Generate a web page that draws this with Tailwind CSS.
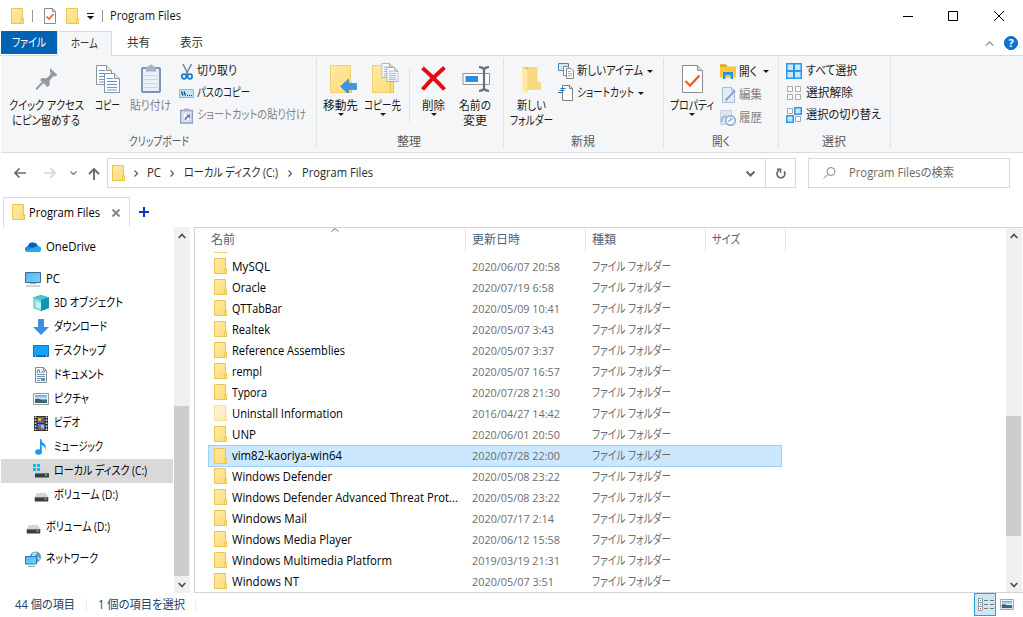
<!DOCTYPE html>
<html lang="ja">
<head>
<meta charset="utf-8">
<title>Program Files</title>
<script src="https://cdn.jsdelivr.net/npm/@tailwindcss/browser@4"></script>
</head>
<body class="bg-white">
<svg class="absolute w-0 h-0">
  <defs>
    <linearGradient id="gf" x1="0" y1="0" x2="1" y2="1"><stop offset="0" stop-color="#ffeaa5"/><stop offset="1" stop-color="#fddc77"/></linearGradient>
    <linearGradient id="gb" x1="0" y1="0" x2="1" y2="1"><stop offset="0" stop-color="#4fb8f5"/><stop offset="1" stop-color="#7cd0ff"/></linearGradient>
    <linearGradient id="gn" x1="0" y1="0" x2="0" y2="1"><stop offset="0" stop-color="#5aa0e6"/><stop offset=".5" stop-color="#dcefff"/><stop offset=".6" stop-color="#4a7f86"/><stop offset="1" stop-color="#2b5a7a"/></linearGradient>
  </defs>
  <symbol id="folder" viewBox="0 0 13 16"><path d="M.5.5h11v10h1v5H.5z" fill="url(#gf)" stroke="#eac54f"/><path d="M10.500 15.500v-4.500h2v4.500z" fill="#ffe798" stroke="#e8c04a" stroke-width=".8"/></symbol>
  <symbol id="bigfolder" viewBox="0 0 26 28"><path d="M.5.5h20v17h1v10H.5z" fill="url(#gf)" stroke="#f0cf6c"/><path d="M18.500 27.500V18q0-1 1.500-1t1.500 1v9q0 .5-.5.5z" fill="#fde08a" stroke="#eac04f"/></symbol>
  <symbol id="doc" viewBox="0 0 16 20"><path d="M.5.5h10l5 5v14H.5z" fill="#fff" stroke="#8d9299"/><path d="M10.500.5v5h5" fill="#e8e8e8" stroke="#8d9299"/><path d="M3 5.500h6M3 8.500h10M3 11.500h10M3 14.500h10M3 17h10" stroke="#5c9ce6"/></symbol>
  <symbol id="down" viewBox="0 0 6 3"><path d="M0 0h6L3 3z" fill="#1b1b1b"/></symbol>
  <symbol id="chev" viewBox="0 0 4 7"><path d="M.5.5l3 3-3 3" fill="none" stroke="#5f5f5f" stroke-width="1.300"/></symbol>
  <symbol id="drive" viewBox="0 0 14 9"><path d="M2.500 0h9L14 4H0z" fill="#d4d4d4"/><path d="M0 4h14v4.500H0z" fill="#3a3d40"/><path d="M0 4h14v1H0z" fill="#777"/><rect x="10" y="5.500" width="2" height="1.500" fill="#3fe05a"/></symbol>
  <symbol id="photo" viewBox="0 0 16 12" preserveAspectRatio="none"><path d="M.5.5h15v11H.5z" fill="#fff" stroke="#989898"/><rect x="2" y="2" width="12" height="8" fill="url(#gn)"/><path d="M2 6q4-1 6 1t6 .5V8H2z" fill="#355f52"/></symbol>
</svg>

<div id="app" class="w-[1023px] h-[617px] flex flex-col overflow-hidden bg-white text-[12px] leading-[16px] text-[#1a1a1a] whitespace-nowrap cursor-default [font-family:'Open_Sans','Noto_Sans_CJK_JP',sans-serif] [font-feature-settings:'palt']">

  <!-- Title bar -->
  <header class="h-[31px] flex items-center justify-between shrink-0">
    <div class="flex items-center pl-[11px]">
      <svg class="w-[13px] h-[16px]"><use href="#folder"/></svg>
      <i class="w-px h-[12px] bg-[#9a9a9a] ml-2 mr-[11px]"></i>
      <svg class="w-[12px] h-[16px]" viewBox="0 0 12 16"><path d="M.5.5h8l3 3v12H.5z" fill="#fff" stroke="#8b8b8b"/><path d="M8.500.5v3h3" fill="#ddd" stroke="#8b8b8b"/><path d="M2.500 8.500l2.500 2.500 4.500-5" fill="none" stroke="#f2622a" stroke-width="1.700"/></svg>
      <svg class="w-[13px] h-[16px] ml-[10px]"><use href="#folder"/></svg>
      <svg class="w-[7px] h-[7px] ml-2 mt-px" viewBox="0 0 7 7"><path d="M0 .5h7" stroke="#111"/><path d="M0 3h7L3.500 6.500z" fill="#111"/></svg>
      <i class="w-px h-[12px] bg-[#9a9a9a] ml-2 mr-[7px]"></i>
      <span data-w="71" class="text-[#111]">Program Files</span>
    </div>
    <div class="flex items-center pr-[19px] text-black">
      <svg class="w-[10px] h-[10px]" viewBox="0 0 10 10"><path d="M0 5.500h10" stroke="currentColor"/></svg>
      <svg class="w-[10px] h-[10px] ml-[35px]" viewBox="0 0 10 10"><path d="M.5.5h9v9h-9z" fill="none" stroke="currentColor"/></svg>
      <svg class="w-[10px] h-[10px] ml-[36px]" viewBox="0 0 10 10"><path d="M0 0l10 10M10 0L0 10" stroke="currentColor"/></svg>
    </div>
  </header>

  <!-- Ribbon tabs -->
  <nav class="h-[25px] flex items-start shrink-0 pl-px border-b border-[#dadbdc] text-[#333]">
    <div class="w-[56px] h-[23px] bg-[#0063b1] text-white flex items-center justify-center"><span data-w="34">ファイル</span></div>
    <div class="w-[55px] h-[25px] bg-[#f5f6f7] border border-b-0 border-[#dadbdc] flex items-center justify-center pb-px"><span data-w="27">ホーム</span></div>
    <div class="w-[54px] h-[24px] flex items-center justify-center"><span data-w="23">共有</span></div>
    <div class="w-[52px] h-[24px] flex items-center justify-center"><span data-w="23">表示</span></div>
    <div class="flex items-center ml-auto h-[24px] pr-[5px]">
      <svg class="w-[9px] h-[5px] mr-[10px]" viewBox="0 0 9 5"><path d="M.7 4.500l3.800-3.500 3.800 3.500" fill="none" stroke="#9a9a9a" stroke-width="1.400"/></svg>
      <div class="size-[14px] rounded-full bg-[#0a74d6] border border-[#0560b8] text-white font-bold text-[11px] leading-[12px] text-center">?</div>
    </div>
  </nav>

  <!-- Ribbon -->
  <section class="h-[97px] flex shrink-0 ml-px bg-[#f5f6f7] border-b border-[#dadbdc]">
    <!-- clipboard -->
    <div class="w-[316px] flex flex-col relative">
      <div class="flex h-[78px]">
        <div class="w-[91px] flex flex-col items-center pt-[12px]">
          <svg class="w-[22px] h-[22px] mb-[8px]" viewBox="0 0 22 22"><path d="M14 0l7.500 7-2.500 1.500-1.500-.3-4 4.300.3 4.500-2.300 2L4 12l2-2 4.800.3 4-4.300-.8-2z" fill="#929ba3"/><path d="M7.500 13.500L0 21.500" stroke="#929ba3" stroke-width="2"/></svg>
          <span data-w="75" class="leading-[15px]">クイック アクセス</span><span data-w="68" class="leading-[15px]">にピン留めする</span>
        </div>
        <div class="w-[31px] flex flex-col items-center pt-[9px]">
          <svg class="w-[24px] h-[28px] mb-[5px]" viewBox="0 0 24 28"><use href="#doc" width="16" height="20"/><use href="#doc" x="8" y="8" width="16" height="20"/></svg>
          <span data-w="25" class="leading-[15px]">コピー</span>
        </div>
        <div class="w-[56px] flex flex-col items-center pt-[8px] text-[#838383]">
          <svg class="w-[20px] h-[29px] mb-[5px]" viewBox="0 0 20 29"><rect x="1" y="4" width="18" height="24" rx="1" fill="#e9f0fa" stroke="#7f93bd" stroke-width="2"/><path d="M5 2.500h3q0-2 2-2t2 2h3v5H5z" fill="#a9b2c2"/><path d="M3 11.500h14M3 15.500h14M3 19.500h14M3 23.500h14" stroke="#c5d6f0"/></svg>
          <span data-w="41" class="leading-[15px]">貼り付け</span>
        </div>
        <div class="flex flex-col pt-[4px]">
          <div class="h-[22px] flex items-center"><svg class="w-[16px] h-[16px] mr-[2px] mt-px" viewBox="0 0 16 16"><path d="M4 0l5 10.500M12.500 0L7 10.500" stroke="#76828e" stroke-width="1.500"/><circle cx="5" cy="12.500" r="2.300" fill="none" stroke="#1979ca" stroke-width="1.700"/><circle cx="10.800" cy="12.500" r="2.300" fill="none" stroke="#1979ca" stroke-width="1.700"/></svg><span data-w="40">切り取り</span></div>
          <div class="h-[22px] flex items-center"><svg class="w-[15px] h-[9px] mr-[3px]" viewBox="0 0 15 9"><path d="M.5.5h14v8H.5z" fill="#bfe3fa" stroke="#8db9d8"/><path d="M2.500 2.500L4 6.500M5 2.500l1.500 4" stroke="#173a57" stroke-width="1.200"/><path d="M8 6.500h1M10 6.500h1M12 6.500h1" stroke="#173a57"/></svg><span data-w="53">パスのコピー</span></div>
          <div class="h-[22px] flex items-center text-[#838383]"><svg class="w-[13px] h-[16px] ml-px mr-[4px] mt-px" viewBox="0 0 13 16"><path d="M.7 2.500h11.600v12.500H.7z" fill="#e9eff8" stroke="#8d9fc2" stroke-width="1.400"/><path d="M4 .5h5v3H4z" fill="#a9b2c2"/><path d="M3 5h7v8H3z" fill="#fff" stroke="#a9badb" stroke-width=".7"/><path d="M4.500 12q0-3.500 3-4L6 6.500h4v4L8.800 9.300Q6.500 10 6 12z" fill="#637fae"/></svg><span data-w="109">ショートカットの貼り付け</span></div>
        </div>
      </div>
      <div class="flex justify-center text-[#5a5a5a]"><span data-w="60">クリップボード</span></div>
      <i class="absolute right-0 top-[2px] w-px h-[90px] bg-[#e2e3e4]"></i>
    </div>
    <!-- organize -->
    <div class="w-[187px] flex flex-col relative">
      <div class="flex h-[78px]">
        <div class="w-[46px] ml-px flex flex-col items-center pt-[9px]">
          <svg class="w-[27px] h-[28px] mb-[5px] ml-[5px]" viewBox="0 0 27 28"><use href="#bigfolder" width="26" height="28"/><path d="M10.500 21.500l8-7.500v4.500h8v6h-8V29z" fill="#3b97e3" stroke="#2c7fc8" stroke-width=".6"/></svg>
          <span data-w="35" class="leading-[15px]">移動先</span><svg class="w-[6px] h-[3px]"><use href="#down"/></svg>
        </div>
        <div class="w-[40px] -ml-px flex flex-col items-center pt-[7px]">
          <svg class="w-[27px] h-[30px] mb-[5px] ml-[4px]" viewBox="0 0 27 30"><use href="#bigfolder" y="2" width="26" height="28"/><use href="#doc" x="9.500" y="0" width="12" height="15"/><use href="#doc" x="14.500" y="4" width="12" height="15"/></svg>
          <span data-w="37" class="leading-[15px]">コピー先</span><svg class="w-[6px] h-[3px]"><use href="#down"/></svg>
        </div>
        <i class="w-px h-[55px] mt-[11px] ml-[6px] bg-[#e2e3e4]"></i>
        <div class="w-[47px] flex flex-col items-center pt-[10px]">
          <svg class="w-[25px] h-[25px] mb-[7px]" viewBox="0 0 25 25"><path d="M1.500 2Q12 11 23.500 23.500M23.500 1.500Q11 12 1.500 23.500" fill="none" stroke="#e60b12" stroke-width="4"/></svg>
          <span data-w="23" class="leading-[15px]">削除</span><svg class="w-[6px] h-[3px]"><use href="#down"/></svg>
        </div>
        <div class="w-[37px] flex flex-col items-center pt-[10px]">
          <svg class="w-[29px] h-[26px] mb-[6px] ml-[2px]" viewBox="0 0 29 26"><path d="M1 7.500h26.500v11H1z" fill="#fff" stroke="#8f969c"/><path d="M3.500 10H16v6H3.500z" fill="#2b8de0"/><path d="M17 1.200q4 0 5 2.300 1-2.300 5-2.300M22 3v20M17 24.800q4 0 5-2.300 1 2.300 5 2.300" fill="none" stroke="#6a7278" stroke-width="2.200"/></svg>
          <span data-w="32" class="leading-[15px]">名前の</span><span data-w="24" class="leading-[15px]">変更</span>
        </div>
      </div>
      <div class="flex justify-center text-[#5a5a5a] pr-[2px]"><span data-w="24">整理</span></div>
      <i class="absolute right-0 top-[2px] w-px h-[90px] bg-[#e2e3e4]"></i>
    </div>
    <!-- new -->
    <div class="w-[160px] flex flex-col relative">
      <div class="flex h-[78px]">
        <div class="w-[54px] flex flex-col items-center pt-[10px]">
          <svg class="w-[19px] h-[28px] mb-[4px]" viewBox="0 0 19 28"><path d="M0 1h15v14l3.500 2v7H4z" fill="#f3c85c"/><path d="M6 1h9.500v14l3.500 2v7H6z" fill="#f9d97f"/><path d="M0 1l5.500 3v24L0 24z" fill="#ffe9a8"/></svg>
          <span data-w="29" class="leading-[15px]">新しい</span><span data-w="43" class="leading-[15px]">フォルダー</span>
        </div>
        <div class="flex flex-col pt-[4px]">
          <div class="h-[22px] flex items-center"><svg class="w-[16px] h-[16px] mr-[3px]" viewBox="0 0 16 16"><path d="M.5.5h10v7H.5z" fill="#cfe8f5" stroke="#4d88a8"/><path d="M5.500 3.500h5v9h-5z" fill="#fff" stroke="#888"/><path d="M8.500 5.500h4.500l2.500 2.500v7.500h-7z" fill="#fff" stroke="#888"/><path d="M10 8.500h3M10 10.500h4M10 12.500h4" stroke="#c98a8a" stroke-width=".8"/></svg><span data-w="66">新しいアイテム</span><svg class="w-[6px] h-[3px] ml-[4px]"><use href="#down"/></svg></div>
          <div class="h-[22px] flex items-center"><svg class="w-[16px] h-[16px] mr-[3px]" viewBox="0 0 16 16"><path d="M4.500.5h7l3 3v12h-10z" fill="#fff" stroke="#808080"/><path d="M11.500.5v3h3" fill="none" stroke="#808080"/><path d="M2.500 3.500h5M1.500 5.500h5M0 7.500h5" stroke="#2670ac" stroke-width="1.200"/></svg><span data-w="57">ショートカット</span><svg class="w-[6px] h-[3px] ml-[4px]"><use href="#down"/></svg></div>
        </div>
      </div>
      <div class="flex justify-center text-[#5a5a5a] pr-[2px]"><span data-w="24">新規</span></div>
      <i class="absolute right-0 top-[2px] w-px h-[90px] bg-[#e2e3e4]"></i>
    </div>
    <!-- open -->
    <div class="w-[115px] flex flex-col relative">
      <div class="flex h-[78px]">
        <div class="w-[56px] flex flex-col items-center pt-[9px]">
          <svg class="w-[21px] h-[28px] mb-[5px]" viewBox="0 0 21 28"><path d="M.5.5h15l5 5v22H.5z" fill="#fff" stroke="#8b8b8b"/><path d="M15.500.5v5h5" fill="#ddd" stroke="#8b8b8b"/><path d="M3.500 16l4.500 4.500 9.500-10" fill="none" stroke="#f2621e" stroke-width="2.400"/></svg>
          <span data-w="44" class="leading-[15px]">プロパティ</span><svg class="w-[6px] h-[3px]"><use href="#down"/></svg>
        </div>
        <div class="flex flex-col pt-[4px]">
          <div class="h-[23px] flex items-center"><svg class="w-[16px] h-[15px] mr-[3px]" viewBox="0 0 16 15"><path d="M0 .5h6l1.500 2H16v11H0z" fill="#f8c93f"/><path d="M0 .5h6l1.500 2H0z" fill="#dd9a18"/><path d="M3 15V8h10v7h-2.500v-4h-5v4z" fill="#2f8fe0"/></svg><span data-w="18">開く</span><svg class="w-[6px] h-[3px] ml-[6px]"><use href="#down"/></svg></div>
          <div class="h-[23px] flex items-center text-[#838383]"><svg class="w-[14px] h-[16px] ml-[2px] mr-[3px]" viewBox="0 0 14 16"><path d="M.5.5h9l3 3v12H.5z" fill="#e3ebf6" stroke="#a9badb"/><path d="M9.500.5v3h3" fill="none" stroke="#a9badb"/><path d="M3.500 13.500l9.500-10" stroke="#8ba3cb" stroke-width="2"/></svg><span data-w="23">編集</span></div>
          <div class="h-[23px] flex items-center text-[#838383]"><svg class="w-[16px] h-[16px] mr-[3px]" viewBox="0 0 16 16"><path d="M.5.5h11v14H.5z" fill="#dde6f3" stroke="#c3d0e6"/><path d="M2 12q-1-5 4-6" stroke="#a6b9d9" stroke-width="2" fill="none"/><circle cx="10.500" cy="10.500" r="4.800" fill="#eef3fa" stroke="#8ba3cb" stroke-width="1.400"/><path d="M10.500 7.500v3l2.500-2M8 11l2.500-.5" stroke="#8ba3cb" fill="none"/></svg><span data-w="23">履歴</span></div>
        </div>
      </div>
      <div class="flex justify-center text-[#5a5a5a] pr-[2px]"><span data-w="18">開く</span></div>
      <i class="absolute right-0 top-[2px] w-px h-[90px] bg-[#e2e3e4]"></i>
    </div>
    <!-- select -->
    <div class="w-[112px] flex flex-col relative pl-[7px]">
      <div class="flex flex-col pt-[4px] h-[78px]">
        <div class="h-[22px] flex items-center"><svg class="w-[16px] h-[16px] mr-[4px]" viewBox="0 0 16 16"><path d="M0 0h16v16H0z" fill="#3096e0"/><path d="M1.500 1.500h5.500V7H1.500zM9 1.500h5.500V7H9zM1.500 9h5.500v5.500H1.500zM9 9h5.500v5.500H9z" fill="#c3e7fd"/></svg><span data-w="51">すべて選択</span></div>
        <div class="h-[22px] flex items-center"><svg class="w-[16px] h-[16px] mr-[4px]" viewBox="0 0 16 16"><path d="M1.500 1.500h5v5h-5zM9.500 1.500h5v5h-5zM1.500 9.500h5v5h-5zM9.500 9.500h5v5h-5z" fill="#fafafa" stroke="#aaa"/></svg><span data-w="47">選択解除</span></div>
        <div class="h-[22px] flex items-center"><svg class="w-[16px] h-[16px] mr-[4px]" viewBox="0 0 16 16"><path d="M1.500 1.500h5v5h-5zM9.500 9.500h5v5h-5z" fill="#fafafa" stroke="#aaa"/><path d="M8.800.8h6.400v6.400H8.800zM.8 8.800h6.400v6.400H.8z" fill="#c3e7fd" stroke="#3096e0" stroke-width="1.500"/></svg><span data-w="75">選択の切り替え</span></div>
      </div>
      <div class="flex justify-center text-[#5a5a5a] pr-[8px]"><span data-w="24">選択</span></div>
      <i class="absolute right-0 top-[2px] w-px h-[90px] bg-[#e2e3e4]"></i>
    </div>
  </section>

  <!-- Address bar -->
  <section class="h-[44px] flex shrink-0 pt-[5px] text-[#2a2a2a]">
    <div class="w-[107px] h-[30px] flex items-center pl-[14px]">
      <svg class="w-[12px] h-[10px]" viewBox="0 0 12 10"><path d="M5.500.5L1 5l4.500 4.500M1 5h11" fill="none" stroke="#6b6b6b" stroke-width="1.700"/></svg>
      <svg class="w-[12px] h-[10px] ml-[18px]" viewBox="0 0 12 10"><path d="M6.500.5L11 5 6.500 9.500M11 5H0" fill="none" stroke="#d6d6d6" stroke-width="1.700"/></svg>
      <svg class="w-[7px] h-[4px] ml-[14px]" viewBox="0 0 7 4"><path d="M.5.5l3 3 3-3" fill="none" stroke="#888" stroke-width="1.500"/></svg>
      <svg class="w-[12px] h-[12px] ml-[11px] mt-[2px]" viewBox="0 0 12 12"><path d="M1 6l5-5 5 5M6 1v11" fill="none" stroke="#6b6b6b" stroke-width="1.900"/></svg>
    </div>
    <div class="w-[689px] h-[30px] flex items-center border border-[#d9d9d9] pl-[4px]">
      <svg class="w-[13px] h-[16px] mb-px"><use href="#folder"/></svg>
      <svg class="w-[4px] h-[7px] ml-[9px] mt-px"><use href="#chev"/></svg>
      <span data-w="14" class="ml-[9px]">PC</span>
      <svg class="w-[4px] h-[7px] ml-[9px] mt-px"><use href="#chev"/></svg>
      <span data-w="94" class="ml-[10px]">ローカル ディスク (C:)</span>
      <svg class="w-[4px] h-[7px] ml-[10px] mt-px"><use href="#chev"/></svg>
      <span data-w="71" class="ml-[10px]">Program Files</span>
      <svg class="w-[9px] h-[6px] ml-auto mr-[10px] mt-[2px]" viewBox="0 0 9 6"><path d="M.5.500l4 4 4-4" fill="none" stroke="#666" stroke-width="2"/></svg>
      <div class="w-[30px] h-full border-l border-[#d9d9d9] flex items-center justify-center"><svg class="w-[10px] h-[11px] mt-px" viewBox="0 0 10 11"><path d="M8 3.200A4 4 0 1 1 3 2.300M1 1.300h3.500v3.500" fill="none" stroke="#666" stroke-width="1.600"/></svg></div>
    </div>
    <div class="w-[202px] h-[30px] ml-[12px] flex items-center border border-[#d9d9d9] pl-[14px] text-[#686868]">
      <svg class="w-[13px] h-[12px] mr-[13px]" viewBox="0 0 13 12"><circle cx="8" cy="4.500" r="4" fill="none" stroke="#858585"/><path d="M5 7.500L.5 11.500" stroke="#858585"/></svg>
      <span data-w="105">Program Filesの検索</span>
    </div>
  </section>

  <!-- Folder tabs -->
  <section class="h-[30px] flex shrink-0 pl-[3px]">
    <div class="w-[127px] h-[30px] border border-b-0 border-[#dadada] flex items-center pl-[8px] text-black">
      <svg class="w-[13px] h-[16px] mb-[2px]"><use href="#folder"/></svg>
      <span data-w="71" class="ml-[4px]">Program Files</span>
      <svg class="w-[8px] h-[8px] ml-[12px]" viewBox="0 0 8 8"><path d="M.5.5l7 7M7.500.5l-7 7" stroke="#868686" stroke-width="2"/></svg>
    </div>
    <svg class="w-[10px] h-[10px] ml-[9px] mt-[10px]" viewBox="0 0 10 10"><path d="M0 5h10M5 0v10" stroke="#0a36c8" stroke-width="2"/></svg>
  </section>

  <!-- Panes -->
  <main class="h-[366px] flex shrink-0">
    <aside id="tree" class="w-[173px] pl-px pt-[8px] text-black"></aside>
    <div class="w-[16px] ml-px bg-[#f0f0f0] flex flex-col items-center relative">
      <svg class="w-[8px] h-[6px] mt-[6px] mr-px" viewBox="0 0 8 6"><path d="M.7 5L4 1.500 7.300 5" fill="none" stroke="#505050" stroke-width="1.800"/></svg>
      <i class="w-[15px] h-[170px] mt-[167px] mr-px bg-[#cdcdcd]"></i>
      <svg class="w-[8px] h-[6px] mt-[6px] mr-px" viewBox="0 0 8 6"><path d="M.7 1L4 4.500 7.300 1" fill="none" stroke="#505050" stroke-width="1.800"/></svg>
    </div>
    <div class="w-[829px] ml-[4px] flex border border-r-0 border-[#d4d4d4]">
      <div class="w-[811px]">
        <div class="h-[24px] flex text-[#4c607a] relative">
          <div class="w-[271px] border-r border-[#e5e5e5] flex items-center pl-[16px]"><span data-w="24">名前</span></div>
          <div class="w-[120px] border-r border-[#e5e5e5] flex items-center pl-[6px]"><span data-w="48">更新日時</span></div>
          <div class="w-[120px] border-r border-[#e5e5e5] flex items-center pl-[6px]"><span data-w="24">種類</span></div>
          <div class="w-[80px] border-r border-[#e5e5e5] flex items-center pl-[6px]"><span data-w="28">サイズ</span></div>
          <svg class="absolute left-[136px] top-0 w-[8px] h-[4px]" viewBox="0 0 8 4"><path d="M.5 3.500L4 .5l3.500 3" fill="none" stroke="#6a6a6a"/></svg>
        </div>
        <div class="h-[4px] pl-[19px]"><div class="w-[13px] h-px bg-[#f0d27a]"></div></div>
        <div id="rows" class="pl-[13px]"></div>
      </div>
      <div class="w-[16px] bg-[#f0f0f0] flex flex-col items-center">
        <svg class="w-[8px] h-[6px] mt-[5px] mr-px" viewBox="0 0 8 6"><path d="M.7 5L4 1.500 7.300 5" fill="none" stroke="#505050" stroke-width="1.800"/></svg>
        <i class="w-[15px] h-[120px] mt-[177px] mr-px bg-[#cdcdcd]"></i>
        <svg class="w-[8px] h-[6px] mt-[46px] mr-px" viewBox="0 0 8 6"><path d="M.7 1L4 4.500 7.300 1" fill="none" stroke="#505050" stroke-width="1.800"/></svg>
      </div>
    </div>
  </main>

  <!-- Status bar -->
  <footer class="h-[24px] flex items-center shrink-0 pl-[15px] text-[#22416b]">
    <span data-w="60">44 個の項目</span>
    <i class="w-px h-[12px] bg-[#ececec] ml-[11px] mr-[11px]"></i>
    <span data-w="87">1 個の項目を選択</span>
    <i class="w-px h-[12px] bg-[#ececec] ml-[10px]"></i>
    <div class="w-[22px] h-[23px] ml-auto mb-px border border-[#26a0da] bg-[#cbe8f6] flex items-center justify-center">
      <svg class="w-[16px] h-[13px] mr-[-2px]" viewBox="0 0 16 13"><path d="M.5.500h4v12h-4zM.5 4.500h4M.5 8.500h4" fill="#fff" stroke="#9a9a9a"/><path d="M2 2h1v1H2z" fill="#3a9a4a"/><path d="M2 6h1v1H2z" fill="#2b7fe0"/><path d="M2 10h1v1H2z" fill="#d02a1a"/><path d="M6 2.500h4M12 2.500h4M6 6.500h4M12 6.500h4M6 10.500h4M12 10.500h4" stroke="#777"/></svg>
    </div>
    <svg class="w-[14px] h-[11px] ml-[4px] mr-[9px] mb-[2px]"><use href="#photo" width="14" height="11"/></svg>
  </footer>
</div>

<script>
const tree = [
  ['onedrive','OneDrive',50,0,8], ['pc','PC',14,0,0], ['cube','3D オブジェクト',69,1,0], ['dl','ダウンロード',53,1,0],
  ['desk','デスクトップ',52,1,0], ['docs','ドキュメント',50,1,0], ['pic','ピクチャ',35,1,0], ['video','ビデオ',26,1,0],
  ['music','ミュージック',49,1,0], ['cdrive','ローカル ディスク (C:)',93,1,0], ['ddrive','ボリューム (D:)',64,1,8],
  ['ddrive','ボリューム (D:)',64,0,8], ['net','ネットワーク',52,0,0]
];
const art = {
  onedrive:'<path d="M3 13Q0 12.500 0 10t3-3q1.500-4 5.500-3.300Q12 4 12.700 7 16 7.500 16 10.200T13 13z" fill="#1689dc"/><path d="M3 7q1.500-4 5.500-3.300Q12 4 12.700 7L8 9z" fill="#0c5db5"/><path d="M6 9.500L12.700 7Q16 7.500 16 10.200T13 13H3q-2 0-2.700-1.500z" fill="#28a8ea"/>',
  pc:'<path d="M.5 1.500h15v10H.5z" fill="url(#gb)" stroke="#3e6d8e"/><path d="M5 12.500h6M1 15h14" stroke="#9aa9b5" stroke-width="1.200"/>',
  cube:'<path d="M8 0l8 2.500v10.500L8 16 0 13V2.500z" fill="#15a7b8"/><path d="M0 2.500L8 5v11L0 13z" fill="#7fdde2"/><path d="M8 0l8 2.500L8 5 0 2.500z" fill="#48c3cf"/><path d="M3 6l5 2v6l-5-2z" fill="#c5f3f2"/><path d="M8 5l8-2.500V13L8 16z" fill="#0f95b2"/>',
  dl:'<path d="M5 0h6v8h5l-8 8-8-8h5z" fill="#3b90e0"/>',
  desk:'<path d="M.5 2.500h15v11H.5z" fill="#18a0fb" stroke="#1377bd"/><path d="M1 13h14" stroke="#0a4f87"/><path d="M2 13h1M13 13h1" stroke="#fff"/>',
  docs:'<path d="M2.500.5h8l3 3v12h-11z" fill="#fff" stroke="#8a8a8a"/><path d="M10.500.5v3h3" fill="none" stroke="#8a8a8a"/><path d="M4 7.500h8M4 9.500h8M4 11.500h8M4 13.500h3" stroke="#6b8fb0"/><path d="M4 6l1.500-4L7 6M8 5h4" stroke="#2e80b8" fill="none"/><path d="M8 11h4v3H8z" fill="#4a92b5"/>',
  pic:'<use href="#photo" y="2" width="16" height="12"/>',
  video:'<path d="M1 1h14v15H1z" fill="#303030"/><path d="M2.500 1.500v14M13.500 1.500v14" stroke="#e6e6e6" stroke-dasharray="1.500 1.500" stroke-width="1.500"/><path d="M4.500 2h7v6h-7z" fill="#4467c8"/><path d="M4.500 9h7v6h-7z" fill="#4f7fd6"/><path d="M5 3h3v3H5zM8 10h3v3H8z" fill="#e0b83a"/><path d="M5 12h3v2.500H5zM9 5h2v3H9z" fill="#b1423a"/>',
  music:'<path d="M8 0q.5 3 3 4.500T12.500 11Q12 7 8.700 6v7.500H7V0z" fill="#1e96f0"/><ellipse cx="5.500" cy="13" rx="3.400" ry="2.700" fill="#1e96f0"/>',
  cdrive:'<use href="#drive" x="2" y="6" width="14" height="9"/><path d="M0 1h3v3H0zM4 1h3v3H4zM0 5h3v3H0zM4 5h3v3H4z" fill="#17b4ee"/>',
  ddrive:'<use href="#drive" x="1.500" y="6" width="14" height="9"/>',
  net:'<circle cx="10.500" cy="6" r="5.500" fill="#5d9fc4"/><path d="M7 3q3-3 5-1l-2 3-3 1zM12 6l3 1-1 3z" fill="#b9dcec"/><path d="M.5 5.500h11v7.500H.5z" fill="url(#gb)" stroke="#2d78ac"/><path d="M3 15.300h7" stroke="#7f96a5"/>'
};
document.getElementById('tree').innerHTML = tree.map(([k, t, w, sub, gap]) =>
  `<div class="h-[24px] flex items-center ${sub ? 'pl-[32px]' : 'pl-[24px]'} ${gap ? 'mb-[8px]' : ''} ${k === 'cdrive' ? 'bg-[#d9d9d9]' : ''}"><svg class="w-[16px] h-[16px] mr-[5px] shrink-0" viewBox="0 0 16 16">${art[k]}</svg><span data-w="${w}">${t}</span></div>`).join('');

const files = [
  ['MySQL',38,'2020/06/07 20:58'], ['Oracle',34,'2020/07/19 6:58'], ['QTTabBar',50,'2020/05/09 10:41'], ['Realtek',38,'2020/05/07 3:43'],
  ['Reference Assemblies',113,'2020/05/07 3:37'], ['rempl',30,'2020/05/07 16:57'], ['Typora',35,'2020/07/28 21:30'],
  ['Uninstall Information',111,'2016/04/27 14:42'], ['UNP',24,'2020/06/01 20:50'], ['vim82-kaoriya-win64',110,'2020/07/28 22:00'],
  ['Windows Defender',100,'2020/05/08 23:22'], ['Windows Defender Advanced Threat Prot...',226,'2020/05/08 23:22'],
  ['Windows Mail',75,'2020/07/17 2:14'], ['Windows Media Player',120,'2020/06/12 15:58'],
  ['Windows Multimedia Platform',160,'2019/03/19 21:31'], ['Windows NT',67,'2020/05/07 3:51']
];
document.getElementById('rows').innerHTML = files.map(([n, w, d], i) =>
  `<div class="w-[574px] flex items-center border ${i === 9 ? 'h-[22px] -mb-px bg-[#cce8ff] border-[#99d1ff]' : 'h-[21px] border-transparent'}">
    <div class="w-[263px] flex items-center pl-[5px] text-black"><svg class="w-[13px] h-[16px] mr-[5px] mb-px ${i === 7 ? 'opacity-50' : ''}"><use href="#folder"/></svg><span data-w="${w}">${n}</span></div>
    <div class="w-[120px] text-[11.5px] text-[#6d6d6d]"><span data-w="${d.length === 16 ? 88 : 82}">${d}</span></div>
    <div class="text-[#6d6d6d]"><span data-w="79">ファイル フォルダー</span></div>
  </div>`).join('');

const fit = el => {
  const natural = parseFloat(getComputedStyle(el).width), w = +el.dataset.w;
  if (!natural) return;
  el.style.transform = `scaleX(${w / natural})`;
  el.style.marginRight = `${w - natural}px`;
};
const watcher = new ResizeObserver(list => list.forEach(e => fit(e.target)));
document.querySelectorAll('[data-w]').forEach(el => {
  el.style.display = 'inline-block';
  el.style.flexShrink = 0;
  el.style.transformOrigin = '0 50%';
  fit(el);
  watcher.observe(el);
});
</script>
</body>
</html>
